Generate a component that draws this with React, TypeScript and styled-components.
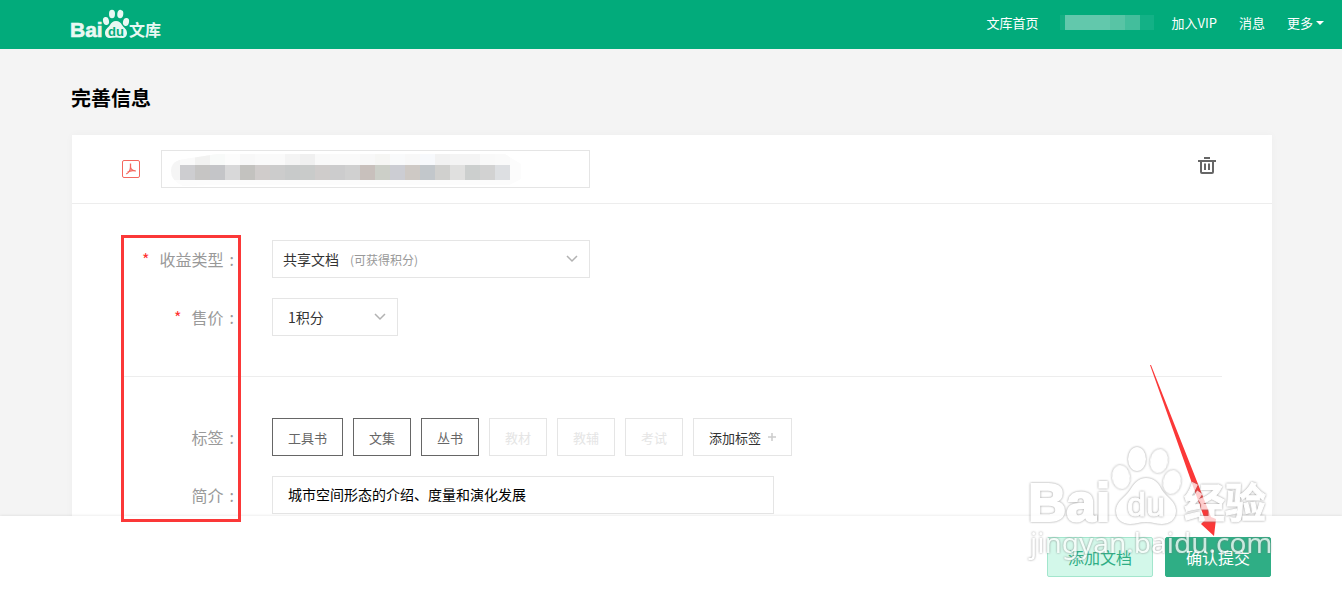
import React from 'react';
import styled, { createGlobalStyle } from 'styled-components';

const GlobalStyle = createGlobalStyle`
  * { box-sizing: border-box; }
  body {
    margin: 0;
    background: #f4f4f4;
    color: #333;
    font-family: "Noto Sans CJK SC", "Liberation Sans", sans-serif;
    font-size: 14px;
  }
  button, input, select { font-family: inherit; }
`;

const Page = styled.div`
  position: relative;
  display: flex;
  flex-direction: column;
  height: 100vh;
  overflow: hidden;
`;

const Header = styled.header`
  display: flex;
  flex: none;
  align-items: center;
  justify-content: space-between;
  height: 49px;
  padding: 0 18px 0 70px;
  background: #02ab7b;
`;

const LogoLink = styled.a`
  display: block;
  height: 40px;
`;

const Nav = styled.nav`
  display: flex;
  align-items: center;
  gap: 22px;
  padding-bottom: 4px;
`;

const NavLink = styled.a`
  display: flex;
  align-items: center;
  gap: 3px;
  color: #fff;
  font-size: 13px;
  line-height: 20px;
  text-decoration: none;
`;

const Caret = styled.span`
  border: 4px solid transparent;
  border-top-color: #fff;
  border-bottom: 0;
`;

const UserName = styled.a`
  display: flex;
  height: 15px;
  width: 94px;
  margin-right: -5px;
`;

const Patch = styled.span<{ $tone: string; $span: number }>`
  flex: ${p => p.$span} 0 0;
  background: ${p => p.$tone};
`;

const Main = styled.main`
  display: flex;
  flex: 1;
  flex-direction: column;
  min-height: 0;
  padding: 35px 70px 0 72px;
`;

const Title = styled.h1`
  margin: 0 0 23px -1px;
  color: #000;
  font-size: 20px;
  font-weight: 700;
  line-height: 28px;
`;

const Card = styled.form`
  flex: 1;
  background: #fff;
  box-shadow: 0 0 8px rgba(0, 0, 0, 0.03);
`;

const FileRow = styled.div`
  display: flex;
  align-items: center;
  height: 69px;
  padding: 0 56px 0 50px;
  border-bottom: 1px solid #ededed;
`;

const FileName = styled.div`
  display: grid;
  width: 429px;
  margin-left: 21px;
  > * { grid-area: 1 / 1; }
  > svg { align-self: center; margin-left: 10px; pointer-events: none; }
`;

const TextInput = styled.input`
  width: 100%;
  height: 38px;
  padding: 0 15px 2px;
  border: 1px solid #e5e5e5;
  background: #fff;
  color: #000;
  font-size: 14px;
`;

const IconButton = styled.button`
  display: flex;
  margin-left: auto;
  padding: 0 0 8px;
  border: 0;
  background: none;
  cursor: pointer;
`;

const Section = styled.section`
  display: grid;
  gap: 20px;
  margin: 0 50px;
  padding: 36px 0 40px;
  & + & {
    padding-top: 41px;
    border-top: 1px solid #ededed;
  }
`;

const Row = styled.div`
  display: flex;
  align-items: center;
  gap: 38px;
  height: 38px;
`;

const Label = styled.label`
  display: flex;
  justify-content: flex-end;
  width: 112px;
  color: #999;
  font-size: 16px;
  line-height: 24px;
`;

const Star = styled.span`
  margin-right: 10px;
  color: #f33;
`;

const Colon = styled.span`
  margin-left: 6px;
`;

const SelectBox = styled.div<{ $width: number }>`
  display: grid;
  align-items: center;
  width: ${p => p.$width}px;
  > * { grid-area: 1 / 1; }
  > svg { justify-self: end; margin-right: 12px; pointer-events: none; }
`;

const Select = styled.select<{ $inset: number }>`
  width: 100%;
  height: 38px;
  padding: 0 30px 0 ${p => p.$inset}px;
  border: 1px solid #e5e5e5;
  border-radius: 0;
  appearance: none;
  background: #fff;
  color: #333;
  font-size: 14px;
`;

const Hint = styled.span`
  margin-left: 78px;
  color: #999;
  font-size: 12px;
  pointer-events: none;
`;

const Tags = styled.div`
  display: flex;
  gap: 10px;
`;

const Tag = styled.button<{ $look: 'on' | 'off' | 'add' }>`
  display: flex;
  align-items: center;
  gap: 7px;
  height: 38px;
  padding: 0 15px;
  border: 1px solid ${p => (p.$look === 'on' ? '#666' : '#e5e5e5')};
  background: #fff;
  color: ${p => ({ on: '#666', off: '#e5e5e5', add: '#333' })[p.$look]};
  font-size: 13px;
  white-space: nowrap;
`;

const Summary = styled.div`
  width: 502px;
`;

const Footer = styled.footer`
  position: relative;
  display: flex;
  flex: none;
  justify-content: flex-end;
  gap: 12px;
  height: 74px;
  padding: 21px 71px 0;
  background: #fff;
  box-shadow: 0 0 3px rgba(0, 0, 0, 0.12);
`;

const Action = styled.button<{ $primary?: boolean }>`
  width: 106px;
  height: 40px;
  padding: 0;
  border: 1px solid ${p => (p.$primary ? '#2fae85' : '#a3e6cd')};
  border-radius: 2px;
  background: ${p => (p.$primary ? '#2fae85' : '#d3f8ea')};
  color: ${p => (p.$primary ? '#fff' : '#2fae85')};
  font-size: 16px;
`;

const Highlight = styled.div`
  position: absolute;
  top: 235px;
  left: 121px;
  width: 120px;
  height: 287px;
  border: 3px solid #fb3838;
  pointer-events: none;
`;

const Arrow = styled.svg`
  position: absolute;
  right: 122px;
  bottom: 50px;
  pointer-events: none;
`;

const Watermark = styled.svg`
  position: absolute;
  right: 62px;
  bottom: 20px;
  opacity: 0.75;
  pointer-events: none;
  text, ellipse, path { filter: drop-shadow(0 0 1px #777); }
`;

const Logo = () => (
  <svg width="94" height="40" viewBox="0 0 94 40" fill="#e9f8f3" role="img" aria-label="Baidu 文库">
    <text x="0" y="32" stroke="#e9f8f3" strokeWidth="0.6" fontFamily="Liberation Sans, sans-serif" fontWeight="700" fontSize="21">Bai</text>
    <ellipse cx="36" cy="16" rx="3" ry="4" transform="rotate(-12 36 16)" />
    <ellipse cx="42" cy="9" rx="3" ry="4.2" />
    <ellipse cx="50.300" cy="9" rx="3" ry="4.2" transform="rotate(8 50 9)" />
    <ellipse cx="56" cy="17" rx="3" ry="4" transform="rotate(14 56 17)" />
    <path d="M46 16c3 0 5 2 6 4 2 3 5 4 5 8 0 3-2 5-5 5-2 0-4-.6-6-.6s-4 .6-6 .6c-3 0-5-2-5-5 0-4 3-5 5-8 1-2 3-4 6-4z" />
    <text x="46" y="31" textAnchor="middle" fill="#02ab7b" fontFamily="Liberation Sans, sans-serif" fontWeight="700" fontSize="13">du</text>
    <text x="59" y="31" fontFamily="Noto Sans CJK SC, sans-serif" fontWeight="700" fontSize="16">文库</text>
  </svg>
);

const upperTones = ['#fafafa', '#f2f2f1', '#f8faf9', '#fcfcfc', '#f8f8f8', '#fafafa', '#fafafa', '#f4f4f4', '#f0f0f0', '#f9f9f9', '#fafafa', '#fafafa', '#f8f8f8', '#f6f6f4', '#f9fafb', '#f8f8f8', '#f7f9fc', '#f2f2f2', '#f4f4f4', '#f4f4f4', '#f9f9f9', '#fafafa'];
const lowerTones = ['#cdcdd0', '#c6c5c4', '#c4c5c8', '#d8d8d9', '#c3c2bf', '#d0cccb', '#cccccc', '#c8caca', '#c9cbca', '#cfcccb', '#cccccd', '#d0d0d0', '#c8c0bc', '#cccfc8', '#cccdd3', '#cec9c5', '#c2c7cb', '#d0d0ce', '#e0e0df', '#cccfce', '#d2d2d2', '#dddfe2'];

const MaskedName = () => (
  <svg width="352" height="36" viewBox="0 0 352 36" aria-hidden="true">
    <clipPath id="name-edge">
      <path d="M0 20Q0 9 14 8L46 3H334L350 13V28L338 34H40L12 35Q0 30 0 20z" />
    </clipPath>
    <g clipPath="url(#name-edge)">
      <rect width="352" height="36" fill="#fcfcfc" />
      <rect y="9" width="9" height="20" fill="#f5f5f5" />
      {upperTones.map((tone, i) => (
        <rect key={i} x={9 + i * 15} y="3" width="15" height="11" fill={tone} />
      ))}
      {lowerTones.map((tone, i) => (
        <rect key={i} x={9 + i * 15} y="14" width="15" height="15" fill={tone} />
      ))}
    </g>
  </svg>
);

const PdfIcon = () => (
  <svg width="18" height="18" viewBox="0 0 18 18" fill="none" stroke="#f4685f" aria-hidden="true">
    <rect x="0.5" y="0.5" width="17" height="17" rx="1.5" />
    <path d="M8.500 3.500v3.500c.2 2.200 2 3.600 5.200 4M8.500 7c0 3-1.500 5.400-4.200 7M5.500 12.200c2-1.400 5-2 8-1.400" strokeWidth="1.300" />
  </svg>
);

const TrashIcon = () => (
  <svg width="18" height="17" viewBox="0 0 18 17" fill="none" stroke="#666" aria-hidden="true">
    <path d="M6 1h6M0 4h18M3 4v11q0 1 1 1h10q1 0 1-1V4" strokeWidth="2" />
    <path d="M7 6.500v6.500M11 6.500v6.500" strokeWidth="2" />
  </svg>
);

const Chevron = () => (
  <svg width="12" height="8" viewBox="0 0 12 8" fill="none" stroke="#b2b2b2" strokeWidth="1.500" aria-hidden="true">
    <path d="M1 1l5 5 5-5" />
  </svg>
);

const PlusIcon = () => (
  <svg width="8" height="8" viewBox="0 0 8 8" stroke="#ccc" strokeWidth="1.500" aria-hidden="true">
    <path d="M4 0v8M0 4h8" />
  </svg>
);

const activeTags = ['工具书', '文集', '丛书'];
const otherTags = ['教材', '教辅', '考试'];

export default function App() {
  return (
    <Page>
      <GlobalStyle />
      <Header>
        <LogoLink href="#"><Logo /></LogoLink>
        <Nav>
          <NavLink href="#">文库首页</NavLink>
          <UserName href="#" aria-label="用户">
            <Patch $tone="#13ae82" $span={5} />
            <Patch $tone="#62c8ac" $span={45} />
            <Patch $tone="#58c4a5" $span={15} />
            <Patch $tone="#43be9c" $span={15} />
            <Patch $tone="#13b186" $span={14} />
          </UserName>
          <NavLink href="#">加入VIP</NavLink>
          <NavLink href="#">消息</NavLink>
          <NavLink href="#">更多<Caret /></NavLink>
        </Nav>
      </Header>

      <Main>
        <Title>完善信息</Title>
        <Card onSubmit={e => e.preventDefault()}>
          <FileRow>
            <PdfIcon />
            <FileName>
              <TextInput aria-label="文档标题" />
              <MaskedName />
            </FileName>
            <IconButton type="button" aria-label="删除"><TrashIcon /></IconButton>
          </FileRow>

          <Section>
            <Row>
              <Label htmlFor="income"><Star>*</Star>收益类型<Colon>:</Colon></Label>
              <SelectBox $width={318}>
                <Select id="income" $inset={10}><option>共享文档</option></Select>
                <Hint>(可获得积分)</Hint>
                <Chevron />
              </SelectBox>
            </Row>
            <Row>
              <Label htmlFor="price"><Star>*</Star>售价<Colon>:</Colon></Label>
              <SelectBox $width={126}>
                <Select id="price" $inset={15}><option>1积分</option></Select>
                <Chevron />
              </SelectBox>
            </Row>
          </Section>

          <Section>
            <Row>
              <Label as="span" id="tags-label">标签<Colon>:</Colon></Label>
              <Tags role="group" aria-labelledby="tags-label">
                {activeTags.map(t => <Tag key={t} type="button" $look="on">{t}</Tag>)}
                {otherTags.map(t => <Tag key={t} type="button" $look="off">{t}</Tag>)}
                <Tag type="button" $look="add">添加标签<PlusIcon /></Tag>
              </Tags>
            </Row>
            <Row>
              <Label htmlFor="summary">简介<Colon>:</Colon></Label>
              <Summary>
                <TextInput id="summary" defaultValue="城市空间形态的介绍、度量和演化发展" />
              </Summary>
            </Row>
          </Section>
        </Card>
      </Main>

      <Footer>
        <Action type="button">添加文档</Action>
        <Action type="button" $primary>确认提交</Action>
      </Footer>

      <Highlight />
      <Arrow width="70" height="175" viewBox="0 0 70 175" fill="#fb3838" aria-hidden="true">
        <path d="M0 0L1 0 61 152 66 154 64 171 51 159 55 155z" />
      </Arrow>
      <Watermark width="260" height="130" viewBox="0 0 260 130" fill="#fff" aria-hidden="true">
        <text x="8" y="81" stroke="#fff" strokeWidth="2" fontFamily="Liberation Sans, sans-serif" fontWeight="700" fontSize="53">Bai</text>
        <ellipse cx="101" cy="37" rx="9" ry="12" transform="rotate(-8 101 37)" />
        <ellipse cx="117" cy="19" rx="9" ry="12" />
        <ellipse cx="139" cy="21" rx="9" ry="12" transform="rotate(10 139 21)" />
        <ellipse cx="152" cy="42" rx="9" ry="12" transform="rotate(10 152 42)" />
        <path d="M126 38c9 0 13 6 16 12 5 8 14 11 14 21 0 9-7 13-14 13-6 0-10-2-16-2s-10 2-16 2c-8 0-14-5-14-13 0-10 9-13 14-21 4-6 8-12 16-12z" />
        <text x="126" y="76" textAnchor="middle" stroke="#fff" strokeWidth="1" fontFamily="Liberation Sans, sans-serif" fontSize="34">du</text>
        <text x="164" y="78" stroke="#fff" strokeWidth="1" fontFamily="Noto Sans CJK SC, sans-serif" fontWeight="700" fontSize="41">经验</text>
        <text x="10" y="113" fontFamily="Noto Sans, sans-serif" fontSize="28">jingyan.baidu.com</text>
      </Watermark>
    </Page>
  );
}
